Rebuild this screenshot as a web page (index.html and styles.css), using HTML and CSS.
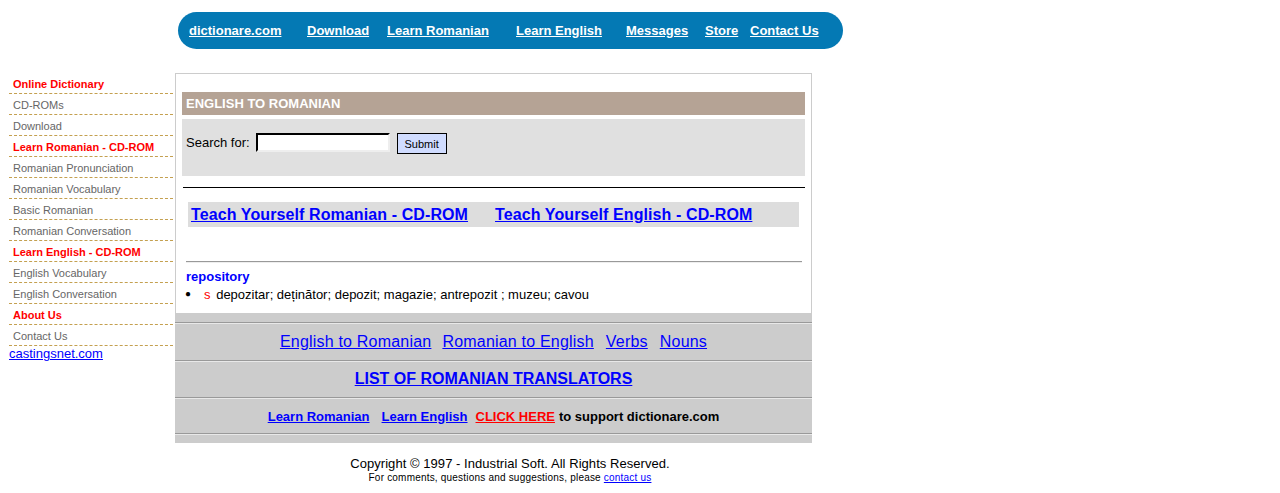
FILE: index.html
```
<!DOCTYPE html>
<html lang="en">
<head>
    <meta charset="UTF-8">
    <title>English to Romanian - dictionare.com</title>
    <link rel="stylesheet" href="styles.css">
</head>
<body>
    <div class="top">
        <div class="topnav">
            <a href="#">dictionare.com</a>
            <a href="#">Download</a>
            <a href="#">Learn Romanian</a>
            <a href="#">Learn English</a>
            <a href="#">Messages</a>
            <a href="#">Store</a>
            <a href="#">Contact Us</a>
        </div>
    </div>

    <div class="page">
        <div class="sidebar">
            <div class="side-item side-head">Online Dictionary</div>
            <div class="side-item">CD-ROMs</div>
            <div class="side-item">Download</div>
            <div class="side-item side-head">Learn Romanian - CD-ROM</div>
            <div class="side-item">Romanian Pronunciation</div>
            <div class="side-item">Romanian Vocabulary</div>
            <div class="side-item">Basic Romanian</div>
            <div class="side-item">Romanian Conversation</div>
            <div class="side-item side-head">Learn English - CD-ROM</div>
            <div class="side-item">English Vocabulary</div>
            <div class="side-item">English Conversation</div>
            <div class="side-item side-head">About Us</div>
            <div class="side-item">Contact Us</div>
            <a href="#" class="side-link">castingsnet.com</a>
        </div>

        <div class="main">
            <div class="panel">
                <div class="panel-title">ENGLISH TO ROMANIAN</div>
                <div class="search">
                    <label for="word">Search for:</label>
                    <input type="text" id="word" class="search-input">
                    <button class="submit">Submit</button>
                </div>
                <div class="rule-black"></div>
                <div class="cd-links">
                    <a href="#">Teach Yourself Romanian - CD-ROM</a>
                    <a href="#">Teach Yourself English - CD-ROM</a>
                </div>
                <div class="rule-gray"></div>
                <div class="word">repository</div>
                <ul class="meanings">
                    <li><span class="pos">s</span> depozitar; deținător; depozit; magazie; antrepozit ; muzeu; cavou</li>
                </ul>
            </div>

            <div class="band">
                <div class="band-sep"></div>
                <div class="band-row row-dict">
                    <a href="#">English to Romanian</a>
                    <a href="#">Romanian to English</a>
                    <a href="#">Verbs</a>
                    <a href="#">Nouns</a>
                </div>
                <div class="band-sep"></div>
                <div class="band-row row-list">
                    <a href="#">LIST OF ROMANIAN TRANSLATORS</a>
                </div>
                <div class="band-sep"></div>
                <div class="band-row row-learn">
                    <a href="#">Learn Romanian</a>
                    <a href="#">Learn English</a>
                    <a href="#" class="red-link">CLICK HERE</a>
                    <span>to support dictionare.com</span>
                </div>
                <div class="band-sep"></div>
            </div>
        </div>
    </div>

    <div class="footer">
        <div class="copyright">Copyright &copy; 1997 - Industrial Soft. All Rights Reserved.</div>
        <div class="comments">For comments, questions and suggestions, please <a href="#">contact us</a></div>
    </div>
</body>
</html>
```

FILE: styles.css
```
html, body {
    margin: 0;
    background-color: #ffffff;
    font-family: "Liberation Sans", Arial, sans-serif;
    color: #000000;
}
a {
    color: #0000ff;
}

/* top bar */
.top {
    padding: 12px 0 0 178px;
}
.topnav {
    width: 665px;
    height: 37px;
    box-sizing: border-box;
    padding-left: 11px;
    background-color: #0479b4;
    border-radius: 19px;
    display: grid;
    grid-template-columns: 118px 80px 129px 110px 79px 45px auto;
    align-items: center;
}
.topnav a {
    color: #ffffff;
    font-size: 13px;
    font-weight: bold;
    justify-self: start;
}

/* page */
.page {
    display: flex;
    gap: 2px;
    padding-left: 9px;
    margin-top: 24px;
}
.sidebar {
    width: 164px;
}
.side-item {
    height: 20px;
    line-height: 22px;
    padding-left: 4px;
    font-size: 11px;
    color: #666666;
    border-bottom: 1px dashed #c4a050;
}
.side-head {
    color: #ff0000;
    font-weight: bold;
}
.side-link {
    display: block;
    font-size: 13px;
    line-height: 15px;
}

.main {
    width: 637px;
}
.panel {
    border: 1px solid #cccccc;
    border-bottom: none;
    padding: 18px 6px 10px 6px;
}
.panel-title {
    height: 23px;
    line-height: 23px;
    padding-left: 4px;
    background-color: #b5a395;
    color: #ffffff;
    font-size: 13px;
    font-weight: bold;
}
.search {
    margin-top: 4px;
    height: 57px;
    box-sizing: border-box;
    padding: 14px 0 0 4px;
    background-color: #e0e0e0;
    display: flex;
    align-items: flex-start;
    font-size: 13px;
}
.search label {
    line-height: 19px;
    margin-right: 6px;
}
.search-input {
    width: 134px;
    height: 19px;
    box-sizing: border-box;
    margin: 0;
    border: 2px inset #eeeeee;
    border-top-color: #333333;
    border-left-color: #333333;
    background-color: #ffffff;
}
.submit {
    margin: 0 0 0 7px;
    width: 50px;
    height: 21px;
    padding: 0;
    border: 1px solid #000000;
    background-color: #d0dcff;
    font-family: "Liberation Sans", Arial, sans-serif;
    font-size: 11px;
    color: #000000;
}
.rule-black {
    margin: 11px 0 0 1px;
    border-top: 1px solid #000000;
}
.cd-links {
    margin: 14px 6px 0 6px;
    height: 25px;
    padding-left: 3px;
    background-color: #dddddd;
    display: flex;
    align-items: center;
    gap: 27px;
}
.cd-links a {
    font-size: 16px;
    font-weight: bold;
    letter-spacing: 0.1px;
}
.rule-gray {
    margin: 34px 3px 0 4px;
    border-top: 1px solid #999999;
    border-bottom: 1px solid #eeeeee;
}
.word {
    margin: 6px 0 0 4px;
    line-height: 16px;
    font-size: 13px;
    font-weight: bold;
    color: #0000ff;
}
.meanings {
    margin: 2px 0 0 0;
    padding-left: 3px;
    list-style: none;
    font-size: 13px;
    line-height: 16px;
}
.meanings li {
    height: 16px;
}
.meanings li::before {
    content: "\25CF";
    font-size: 10px;
    line-height: 10px;
    margin-right: 13px;
    vertical-align: 2px;
}
.pos {
    color: #ff0000;
    margin-right: 2px;
}

/* gray link band */
.band {
    background-color: #cccccc;
    padding: 9px 0 8px 0;
}
.band-sep {
    border-top: 1px solid #999999;
    border-bottom: 1px solid #e8e8e8;
}
.band-row {
    display: flex;
    justify-content: center;
    align-items: center;
    gap: 12px;
}
.row-dict {
    height: 36px;
    font-size: 16px;
    letter-spacing: 0.2px;
}
.row-dict a:first-child {
    margin-right: -1px;
}
.row-list {
    height: 35px;
    padding-bottom: 2px;
    box-sizing: border-box;
    font-size: 16px;
    font-weight: bold;
}
.row-learn {
    height: 34px;
    font-size: 13px;
    font-weight: bold;
    gap: 8px;
}
.row-learn a:first-child {
    margin-right: 4px;
}
.row-learn span {
    margin-left: -4px;
}
.red-link {
    color: #ff0000;
}

/* footer */
.footer {
    width: 1020px;
    padding-top: 13px;
    text-align: center;
}
.copyright {
    font-size: 13px;
    line-height: 16px;
    letter-spacing: 0.05px;
}
.comments {
    font-size: 10px;
    line-height: 12px;
    letter-spacing: 0.2px;
}
```
